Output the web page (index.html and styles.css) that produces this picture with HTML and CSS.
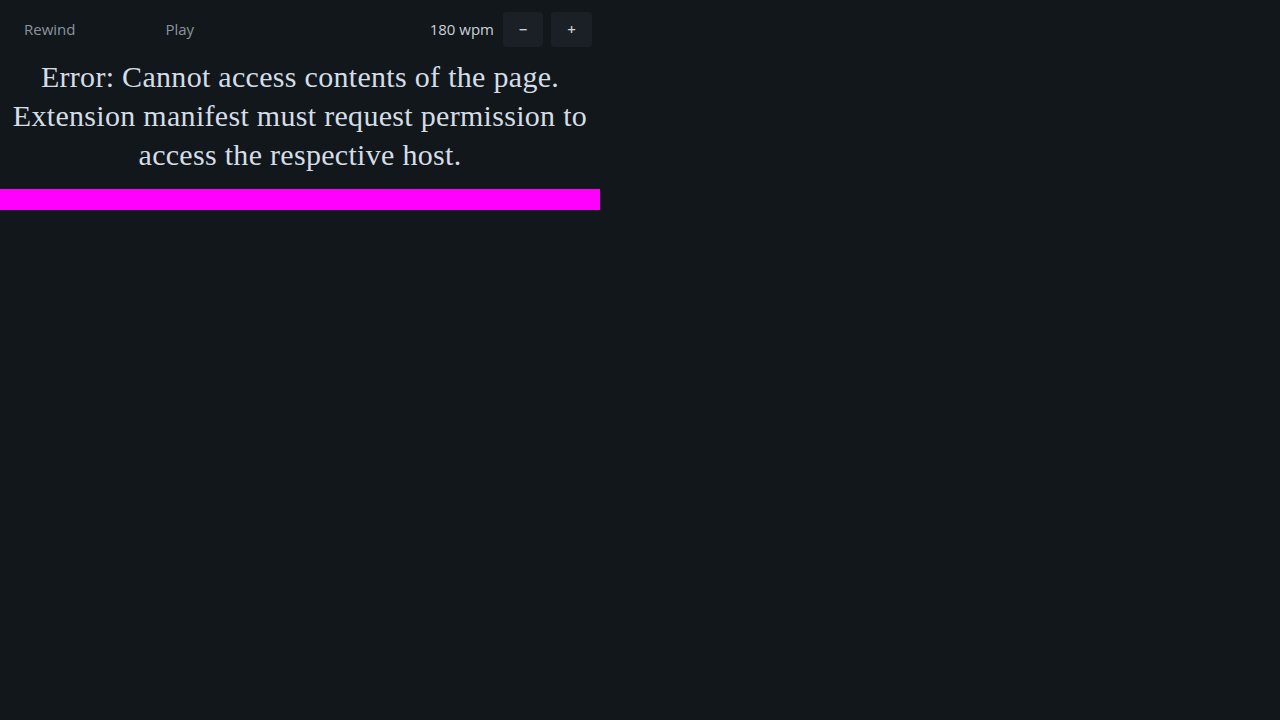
FILE: index.html
```html
<!DOCTYPE html>
<html>
<head>
<meta charset="utf-8">
<link rel="stylesheet" href="styles.css">
</head>
<body>
<div class="app">
  <div class="toolbar">
    <button class="text-btn rewind">Rewind</button>
    <button class="text-btn play">Play</button>
    <div class="spacer"></div>
    <span class="wpm">180 wpm</span>
    <button class="step-btn minus">−</button>
    <button class="step-btn plus">+</button>
  </div>
  <p class="message">Error: Cannot access contents of the page. Extension manifest must request permission to access the respective host.</p>
  <div class="bar"></div>
</div>
</body>
</html>
```
FILE: styles.css
```css
html, body {
  margin: 0;
  padding: 0;
  background: #12171b;
  height: 100%;
}
.app {
  width: 600px;
}
.toolbar {
  display: flex;
  align-items: center;
  padding: 12px 8px 0 0;
  height: 35px;
  font-family: "Open Sans", sans-serif;
  font-size: 15px;
}
.text-btn {
  background: none;
  border: none;
  color: #8b949e;
  font-family: inherit;
  font-size: 15px;
  line-height: 20px;
  padding: 0 0 2px;
  cursor: pointer;
}
.rewind {
  margin-left: 24px;
}
.play {
  margin-left: 90px;
}
.spacer {
  flex: 1;
}
.wpm {
  color: #c9d1d9;
  margin-right: 9px;
  padding-bottom: 2px;
}
.step-btn {
  width: 40px;
  height: 35px;
  background: #1b2026;
  border: none;
  border-radius: 4px;
  color: #c9d1d9;
  font-family: inherit;
  font-size: 15px;
  font-weight: 600;
  padding: 0 0 2px;
}
.plus {
  width: 41px;
  margin-left: 8px;
}
.message {
  margin: 10px 0 0;
  font-family: "Liberation Serif", serif;
  font-size: 30px;
  letter-spacing: 0.3px;
  line-height: 39px;
  color: #d4dde6;
  text-align: center;
}
.bar {
  margin-top: 15px;
  height: 21px;
  background: #ff00ff;
}
```
